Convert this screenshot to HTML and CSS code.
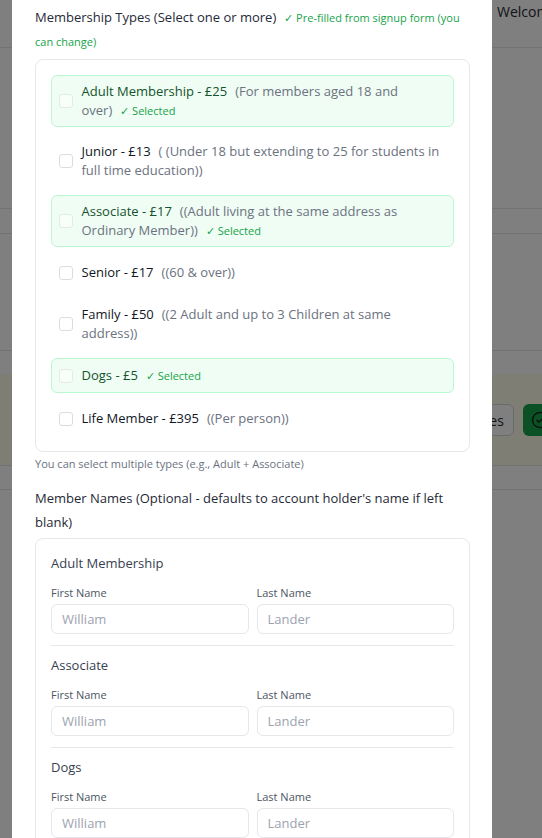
FILE: index.html
```html
<!DOCTYPE html>
<html lang="en">
<head>
<meta charset="utf-8">
<title>Membership</title>
<link rel="stylesheet" href="styles.css">
</head>
<body>
<div class="page">
  <header class="bg-header"><span class="welcome">Welcome back, William</span></header>
  <div class="bg-block bg-block-1"></div>
  <div class="bg-bar"></div>
  <div class="bg-block bg-block-2"></div>
  <div class="bg-spacer"></div>
  <div class="bg-band">
    <div class="bg-actions">
      <button class="bg-btn">Cancel Changes</button>
      <button class="bg-btn-green"><svg class="bg-icon" viewBox="0 0 24 24" width="18" height="18" fill="none" stroke="currentColor" stroke-width="2" stroke-linecap="round" stroke-linejoin="round"><circle cx="12" cy="12" r="10"/><path d="M8 12.5l2.5 2.5L16 9.5"/></svg>Save</button>
    </div>
  </div>
  <div class="bg-bar2"></div>
  <div class="bg-rest"></div>
</div>
<div class="overlay"></div>

<div class="modal">
  <div class="field-label">Membership Types (Select one or more)<span class="prefill">✓ Pre-filled from signup form (you can change)</span></div>

  <div class="types-box">
    <div class="opt selected">
      <span class="cb"></span>
      <div class="opt-text"><span class="opt-title">Adult Membership - £25</span><span class="opt-desc">(For members aged 18 and over)</span><span class="opt-sel">✓&nbsp;Selected</span></div>
    </div>
    <div class="opt">
      <span class="cb"></span>
      <div class="opt-text"><span class="opt-title">Junior - £13</span><span class="opt-desc">( (Under 18 but extending to 25 for students in full time education))</span></div>
    </div>
    <div class="opt selected">
      <span class="cb"></span>
      <div class="opt-text"><span class="opt-title">Associate - £17</span><span class="opt-desc">((Adult living at the same address as Ordinary Member))</span><span class="opt-sel">✓&nbsp;Selected</span></div>
    </div>
    <div class="opt">
      <span class="cb"></span>
      <div class="opt-text"><span class="opt-title">Senior - £17</span><span class="opt-desc">((60 &amp; over))</span></div>
    </div>
    <div class="opt">
      <span class="cb"></span>
      <div class="opt-text"><span class="opt-title">Family - £50</span><span class="opt-desc">((2 Adult and up to 3 Children at same address))</span></div>
    </div>
    <div class="opt selected">
      <span class="cb"></span>
      <div class="opt-text"><span class="opt-title">Dogs - £5</span><span class="opt-sel">✓&nbsp;Selected</span></div>
    </div>
    <div class="opt">
      <span class="cb"></span>
      <div class="opt-text"><span class="opt-title">Life Member - £395</span><span class="opt-desc">((Per person))</span></div>
    </div>
  </div>
  <p class="hint">You can select multiple types (e.g., Adult + Associate)</p>

  <div class="field-label names-label">Member Names (Optional - defaults to account holder's name if left blank)</div>

  <div class="names-box">
    <div class="member">
      <h4 class="member-title">Adult Membership</h4>
      <div class="fields">
        <label class="field"><span class="field-name">First Name</span><input class="input" type="text" placeholder="William"></label>
        <label class="field"><span class="field-name">Last Name</span><input class="input" type="text" placeholder="Lander"></label>
      </div>
    </div>
    <div class="member">
      <h4 class="member-title">Associate</h4>
      <div class="fields">
        <label class="field"><span class="field-name">First Name</span><input class="input" type="text" placeholder="William"></label>
        <label class="field"><span class="field-name">Last Name</span><input class="input" type="text" placeholder="Lander"></label>
      </div>
    </div>
    <div class="member">
      <h4 class="member-title">Dogs</h4>
      <div class="fields">
        <label class="field"><span class="field-name">First Name</span><input class="input" type="text" placeholder="William"></label>
        <label class="field"><span class="field-name">Last Name</span><input class="input" type="text" placeholder="Lander"></label>
      </div>
    </div>
  </div>
</div>
</body>
</html>
```
FILE: styles.css
```css
* { box-sizing: border-box; }
html, body { margin: 0; padding: 0; height: 100%; overflow: hidden; }
body { font-family: "Open Sans", "Noto Sans", sans-serif; background: #fff; color: #1f2937; }

/* ---------- background page ---------- */
.page { width: 542px; }
.bg-header { height: 48px; border-bottom: 1px solid #e5e7eb; padding-left: 497px; white-space: nowrap; overflow: hidden; }
.welcome { font-size: 14px; line-height: 20px; color: #1f2937; }
.bg-block { border-bottom: 1px solid #e5e7eb; }
.bg-block-1 { height: 161px; }
.bg-bar { height: 25px; border-bottom: 1px solid #e5e7eb; }
.bg-block-2 { height: 117px; }
.bg-spacer { height: 23px; }
.bg-band { height: 92px; background: #fefce8; border-bottom: 1px solid #e5e7eb; padding-top: 30px; overflow: hidden; }
.bg-actions { display: flex; gap: 9px; padding-left: 400px; width: 700px; }
.bg-btn { width: 114px; height: 32px; border: 1px solid #d1d5db; border-radius: 6px; background: #fff; font: 14px "Open Sans", sans-serif; color: #1f2937; text-align: right; padding: 0 11px 0 0; white-space: nowrap; }
.bg-btn-green { display: flex; align-items: center; gap: 6px; height: 32px; padding: 0 12px 0 8px; border: 0; border-radius: 6px; background: #16a34a; color: #fff; font: 14px "Open Sans", sans-serif; }
.bg-icon { color: #0f2d1a; }
.bg-bar2 { height: 24px; border-bottom: 1px solid #e5e7eb; }

.overlay { position: fixed; inset: 0; background: rgba(0, 0, 0, 0.5); }

/* ---------- modal ---------- */
.modal {
  position: fixed; left: 12px; top: 0; width: 480px; height: 100%;
  background: #fff; padding: 5px 22px 0 23px; overflow: hidden;
}
.field-label { font-size: 13px; line-height: 24px; color: #1f2937; margin: 0 0 6px; }
.prefill { margin-left: 8px; font-size: 11px; line-height: 16px; color: #16a34a; }

.types-box {
  border: 1px solid #e5e7eb; border-radius: 8px; padding: 15px;
  display: flex; flex-direction: column; gap: 8px;
}
.opt {
  display: flex; align-items: center; gap: 8.5px;
  padding: 6px 7px; border: 1px solid transparent; border-radius: 6px;
  font-size: 13px; line-height: 19px;
}
.opt.selected { background: #f0fdf4; border-color: #bbf7d0; }
.cb { flex: none; width: 14px; height: 14px; margin: 3.5px 0; border: 1px solid #d9dde2; border-radius: 3px; background: #fff; }
.opt.selected .cb { opacity: 0.55; }
.opt-text { flex: 1; min-width: 0; }
.opt-title { color: #111827; }
.opt.selected .opt-title { color: #14532d; }
.opt-desc { margin-left: 8px; color: #6b7280; }
.opt-sel { margin-left: 8px; font-size: 11px; line-height: 14px; color: #16a34a; }

.hint { margin: 4px 0 0; font-size: 11px; line-height: 16px; color: #6b7280; }

.names-label { margin: 14px 0 4px; }

.names-box { border: 1px solid #e5e7eb; border-radius: 8px; padding: 16px 15px 15px; }
.member + .member { border-top: 1px solid #e5e7eb; margin-top: 11px; padding-top: 11px; }
.member-title { margin: 0 0 13px; font-size: 13px; line-height: 17px; font-weight: 400; color: #374151; }
.fields { display: grid; grid-template-columns: 1fr 1fr; gap: 8px; }
.field { display: flex; flex-direction: column; }
.field-name { font-size: 11px; line-height: 16px; color: #4b5563; margin-bottom: 3px; }
.input {
  width: 100%; height: 30px; border: 1px solid #e5e7eb; border-radius: 6px;
  padding: 0 10px; font: 13px "Open Sans", sans-serif; color: #111827; background: #fff; outline: none;
}
.input::placeholder { color: #9ca3af; }
```
